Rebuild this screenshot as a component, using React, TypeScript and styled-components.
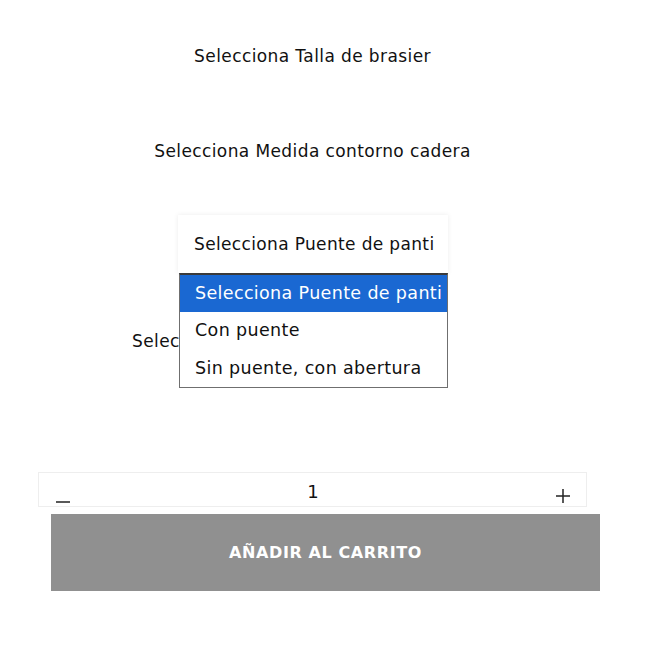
import React from "react";
import styled, { createGlobalStyle } from "styled-components";

const FONT = `"DejaVu Sans", "Open Sans", sans-serif`;

const Global = createGlobalStyle`
  html, body { margin: 0; padding: 0; background: #fff; }
  body { font-family: ${FONT}; color: #111; }
`;

const Page = styled.div`
  position: relative;
  width: 656px;
  min-height: 645px;
  padding-top: 44px;
  box-sizing: border-box;
`;

const Column = styled.div`
  margin-left: 38px;
  width: 549px;
  display: flex;
  flex-direction: column;
`;

const Label = styled.div<{ $gap: number; $indent?: number }>`
  margin-top: ${(p) => p.$gap}px;
  padding-left: ${(p) => p.$indent ?? 0}px;
  height: 24px;
  line-height: 24px;
  font-size: 17px;
  letter-spacing: 0.4px;
  text-align: ${(p) => (p.$indent ? "left" : "center")};
  white-space: nowrap;
  color: #111;
`;

const SelectWrap = styled.div`
  position: relative;
  margin-top: 52px;
  margin-left: 140px;
  width: 270px;
`;

const SelectBox = styled.div`
  height: 58px;
  box-sizing: border-box;
  padding-left: 16px;
  display: flex;
  align-items: center;
  font-size: 17px;
  letter-spacing: 0.35px;
  white-space: nowrap;
  background: #fff;
  box-shadow: 0 0 5px rgba(0, 0, 0, 0.08);
  color: #111;
`;

const Popup = styled.ul`
  position: absolute;
  top: 58px;
  left: 1px;
  width: 269px;
  margin: 0;
  padding: 0;
  list-style: none;
  box-sizing: border-box;
  border: 1px solid #6f6f6f;
  border-top: 2px solid #3a3a3a;
  background: #fff;
  z-index: 5;
`;

const Option = styled.li<{ $active?: boolean; $h: number }>`
  height: ${(p) => p.$h}px;
  line-height: ${(p) => p.$h}px;
  padding-left: 15px;
  font-size: 17.5px;
  letter-spacing: 0.35px;
  white-space: nowrap;
  overflow: hidden;
  background: ${(p) => (p.$active ? "#1a68d2" : "transparent")};
  color: ${(p) => (p.$active ? "#fff" : "#111")};
`;

const QtyBox = styled.div`
  margin-top: 119px;
  height: 35px;
  box-sizing: border-box;
  border: 1px solid #eeeeee;
  display: flex;
  justify-content: space-between;
`;

const QtyButton = styled.button<{ $side: "left" | "right" }>`
  align-self: flex-end;
  border: 0;
  background: none;
  padding: 0;
  margin: 0 ${(p) => (p.$side === "right" ? "16px" : "0")} 3px
    ${(p) => (p.$side === "left" ? "17px" : "0")};
  width: 14px;
  height: 14px;
  display: flex;
  align-items: center;
  justify-content: center;
  cursor: pointer;
`;

const QtyValue = styled.div`
  font-size: 18px;
  line-height: 20px;
  padding-top: 9px;
  color: #111;
`;

const AddButton = styled.button`
  display: block;
  margin-top: 7px;
  margin-left: 51px;
  width: 549px;
  height: 77px;
  border: 0;
  padding: 0;
  background: #909090;
  color: #fff;
  font-family: ${FONT};
  font-weight: 700;
  font-size: 16px;
  letter-spacing: 0.6px;
  text-transform: uppercase;
`;

export default function App() {
  return (
    <>
      <Global />
      <Page>
        <Column>
          <Label $gap={0}>Selecciona Talla de brasier</Label>
          <Label $gap={71}>Selecciona Medida contorno cadera</Label>
          <SelectWrap>
            <SelectBox>Selecciona Puente de panti</SelectBox>
            <Popup>
              <Option $active $h={37}>Selecciona Puente de panti</Option>
              <Option $h={37}>Con puente</Option>
              <Option $h={38}>Sin puente, con abertura</Option>
            </Popup>
          </SelectWrap>
          <Label $gap={56} $indent={94}>Selecciona Color</Label>
          <QtyBox>
            <QtyButton $side="left" aria-label="Disminuir">
              <svg width="14" height="14" viewBox="0 0 14 14">
                <line x1="0" y1="13" x2="14" y2="13" stroke="#222" strokeWidth="1.5" />
              </svg>
            </QtyButton>
            <QtyValue>1</QtyValue>
            <QtyButton $side="right" aria-label="Aumentar">
              <svg width="14" height="14" viewBox="0 0 14 14">
                <line x1="0" y1="7" x2="14" y2="7" stroke="#222" strokeWidth="1.5" />
                <line x1="7" y1="0" x2="7" y2="14" stroke="#222" strokeWidth="1.5" />
              </svg>
            </QtyButton>
          </QtyBox>
        </Column>
        <AddButton>Añadir al carrito</AddButton>
      </Page>
    </>
  );
}
